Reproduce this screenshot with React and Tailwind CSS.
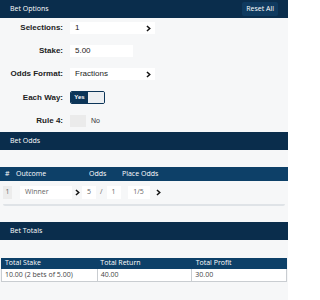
import React from 'react';

const sans = { fontFamily: '"Liberation Sans", Arial, sans-serif' };
const round = { fontFamily: '"Open Sans", "Noto Sans", sans-serif' };

function Chevron({ className = '' }) {
  return (
    <svg viewBox="0 0 8 10" className={`h-[7px] w-[5px] ${className}`}>
      <path d="M1.5 1 L6 5 L1.5 9" fill="none" stroke="#111" strokeWidth="2.4" strokeLinejoin="miter" />
    </svg>
  );
}

function SectionHeader({ title, children }) {
  return (
    <div className="flex h-[18px] items-center justify-between bg-[#0a2d4c] pl-[10px] pr-[10px] text-[7px] text-white" style={round}>
      <span>{title}</span>
      {children}
    </div>
  );
}

function Row({ label, children }) {
  return (
    <div className="flex items-center gap-[7px]">
      <div className="w-[63px] text-right text-[8px] font-bold text-[#222]" style={sans}>
        {label}
      </div>
      {children}
    </div>
  );
}

function Field({ value, width, chevron }) {
  return (
    <div className={`flex h-[12px] items-center justify-between bg-white pl-[5px] pr-[4px] text-[8px] text-[#222] ${width}`} style={sans}>
      <span>{value}</span>
      {chevron && <Chevron />}
    </div>
  );
}

export default function App() {
  return (
    <div className="h-[300px] w-[288px] overflow-hidden bg-[#f6f7f8]">
      <SectionHeader title="Bet Options">
        <button type="button" className="h-[14px] rounded-[2px] bg-[#0f3a5f] px-[4px] text-[7px] text-white">
          Reset All
        </button>
      </SectionHeader>

      <div className="flex flex-col gap-[11px] pb-[5px] pt-[4px]">
        <Row label="Selections:">
          <Field value="1" width="w-[85px]" chevron />
        </Row>
        <Row label="Stake:">
          <Field value="5.00" width="w-[63px]" />
        </Row>
        <Row label="Odds Format:">
          <Field value="Fractions" width="w-[85px]" chevron />
        </Row>
        <Row label="Each Way:">
          <div className="flex h-[13px] w-[35px] overflow-hidden rounded-[2px] border border-[#0c3558]">
            <div className="flex w-[17px] items-center justify-center bg-[#0c3558] text-[6px] font-bold text-white" style={sans}>
              Yes
            </div>
            <div className="flex-1 bg-[#eceff2]" />
          </div>
        </Row>
        <Row label="Rule 4:">
          <div className="flex items-center gap-[5px]">
            <div className="h-[12px] w-[16px] bg-[#ebebeb]" />
            <span className="text-[7px] text-[#333]" style={sans}>No</span>
          </div>
        </Row>
      </div>

      <SectionHeader title="Bet Odds" />
      <div className="h-[17px]" />
      <div className="flex h-[14px] items-center bg-[#0d4068] text-[7px] text-white" style={round}>
        <span className="w-[16px] pl-[5px]">#</span>
        <span className="w-[73px]">Outcome</span>
        <span className="w-[33px]">Odds</span>
        <span>Place Odds</span>
      </div>
      <div className="mx-[3px] flex h-[25px] items-center rounded-b-[2px] border-b-2 border-[#dfe3e7] text-[7px] text-[#666]" style={round}>
        <div className="flex h-[13px] w-[9px] items-center justify-center bg-[#ececec]">1</div>
        <div className="ml-[8px] flex h-[13px] w-[52px] items-center bg-white pl-[5px]">Winner</div>
        <Chevron className="ml-[3px]" />
        <div className="ml-[2px] flex h-[13px] w-[14px] items-center justify-center bg-white">5</div>
        <span className="mx-[4px]">/</span>
        <div className="flex h-[13px] w-[14px] items-center justify-center bg-white">1</div>
        <div className="ml-[7px] flex h-[13px] w-[22px] items-center justify-center bg-white">1/5</div>
        <Chevron className="ml-[6px]" />
      </div>

      <div className="h-[16px]" />
      <SectionHeader title="Bet Totals" />
      <div className="h-[18px]" />
      <div className="mx-[1px] text-[7px]" style={round}>
        <div className="grid h-[11px] grid-cols-3 items-center bg-[#0d4068] text-white">
          <span className="pl-[4px]">Total Stake</span>
          <span className="pl-[4px]">Total Return</span>
          <span className="pl-[4px]">Total Profit</span>
        </div>
        <div className="grid h-[13px] grid-cols-3 border border-t-0 border-[#c9cdd1] bg-white text-[#444]">
          <span className="flex items-center pl-[3px]">10.00 (2 bets of 5.00)</span>
          <span className="flex items-center border-l border-[#c9cdd1] pl-[3px]">40.00</span>
          <span className="flex items-center border-l border-[#c9cdd1] pl-[3px]">30.00</span>
        </div>
      </div>
    </div>
  );
}
